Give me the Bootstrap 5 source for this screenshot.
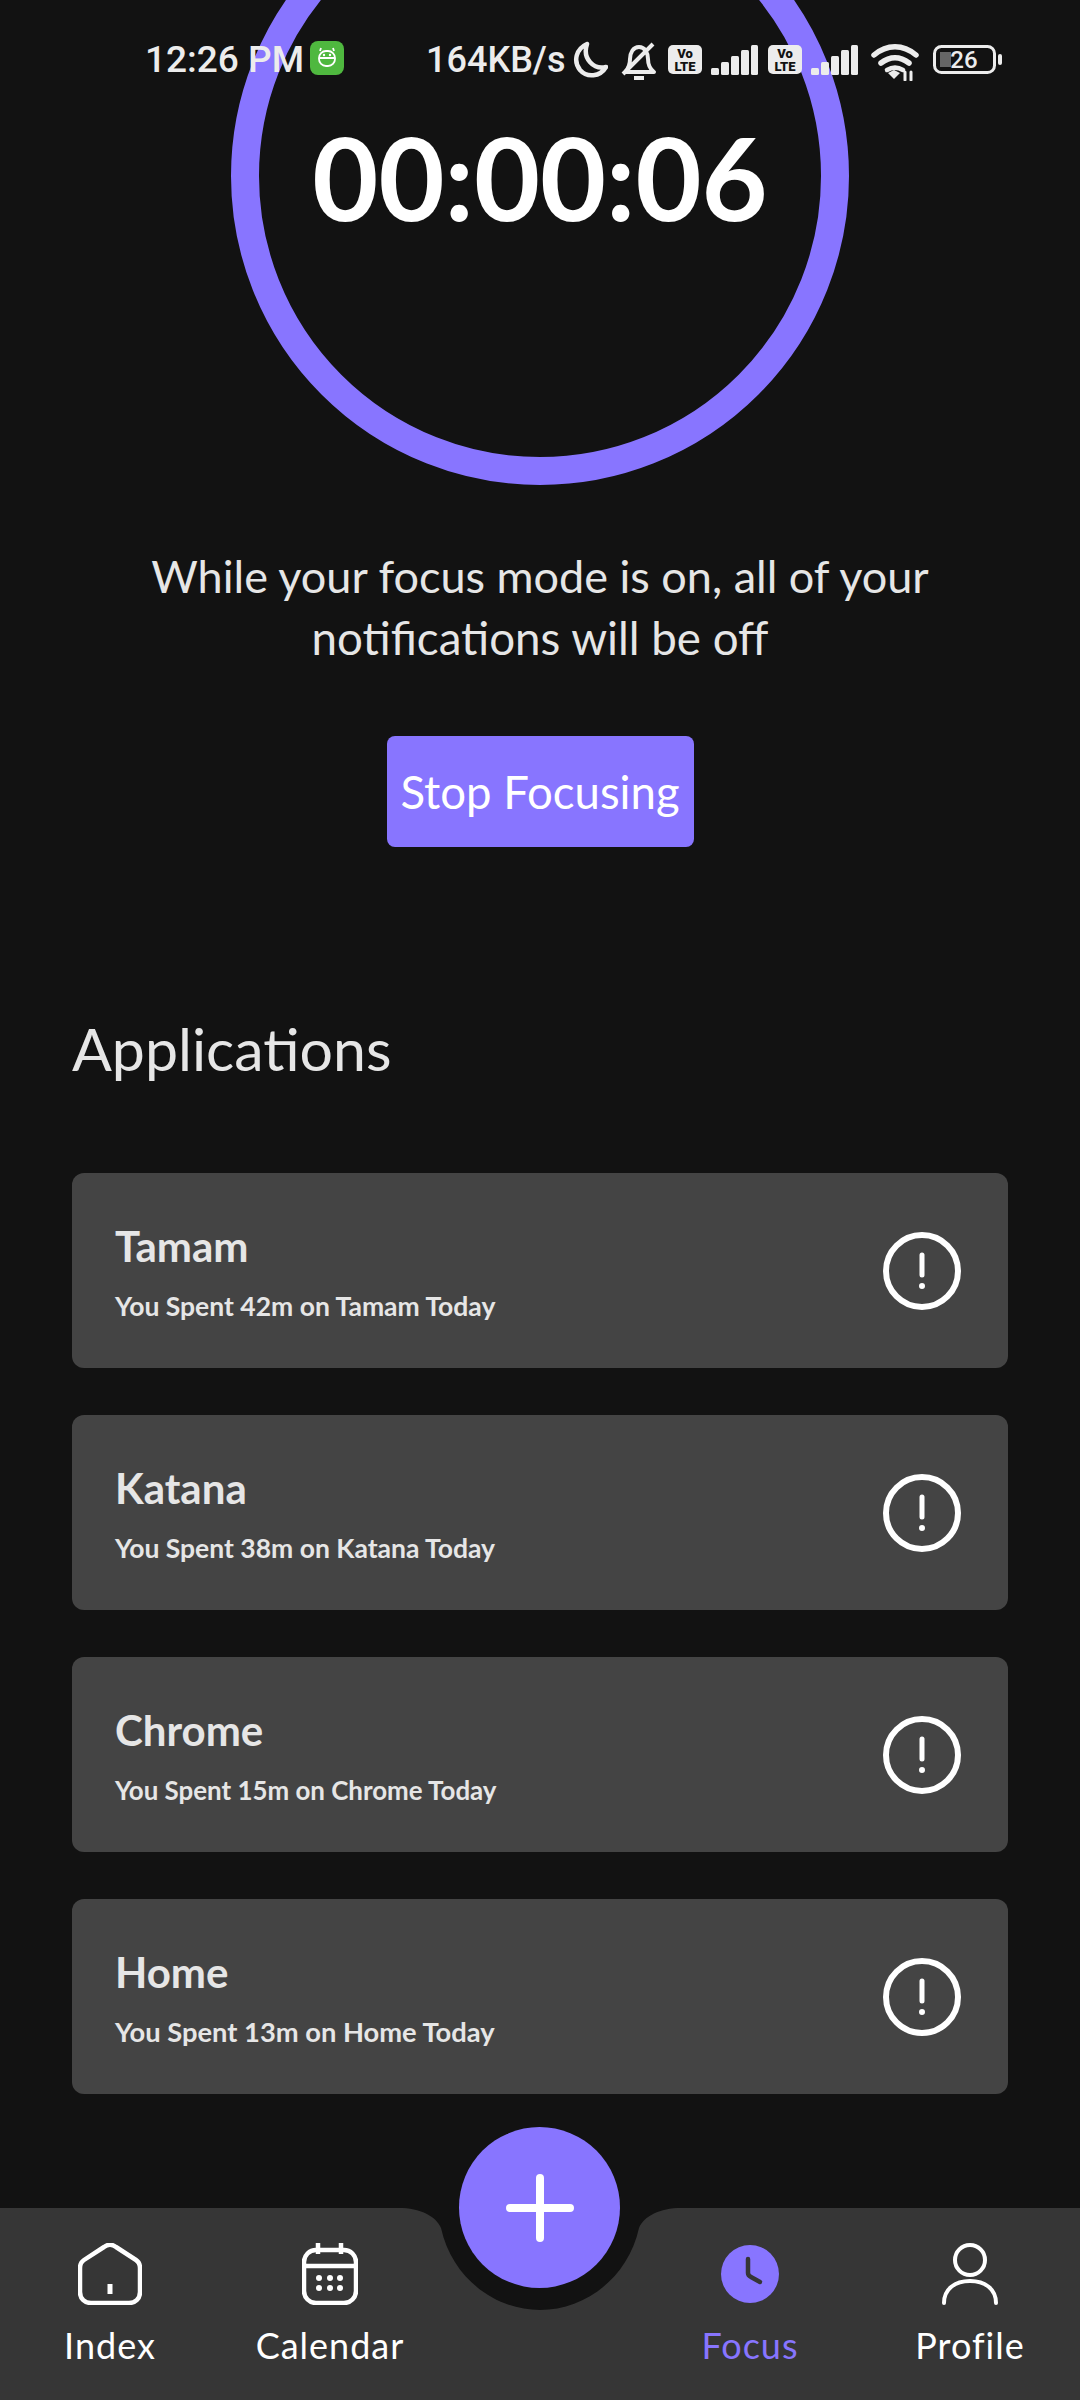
<!DOCTYPE html>
<html lang="en">
<head>
    <meta charset="UTF-8">
    <meta name="viewport" content="width=device-width, initial-scale=1.0">
    <title>Focus</title>
    <link href="https://cdn.jsdelivr.net/npm/bootstrap@5.3.0/dist/css/bootstrap.min.css" rel="stylesheet">
    <script src="https://cdn.jsdelivr.net/npm/bootstrap@5.3.0/dist/js/bootstrap.bundle.min.js"></script>
    <style>
        html, body { height: 100%; }
        body {
            background-color: #121212;
            color: #e6e6e6;
            font-family: Lato, "Liberation Sans", sans-serif;
            overflow: hidden;
        }
        .phone-page { width: 1080px; height: 2400px; overflow: hidden; }
        .status-row {
            top: 0; left: 0; width: 1080px; height: 120px;
            padding: 41px 0 0 145px;
            font-family: Roboto, "Liberation Sans", sans-serif;
            font-size: 37px; font-weight: 500; line-height: 38px; color: #ececec;
            z-index: 5;
        }
        .status-row svg { display: block; flex: none; }
        .status-time { width: 157px; white-space: nowrap; }
        .status-speed { width: 142px; margin-left: 82px; font-size: 36px; white-space: nowrap; }
        .focus-ring {
            width: 618px; height: 618px; margin-top: -133px;
            border: 28px solid #8875ff; border-radius: 50%;
        }
        .focus-time { font-size: 114px; font-weight: 700; line-height: 1; color: #fff; margin-top: 2px; }
        .focus-note { font-size: 45px; line-height: 61px; margin-top: 61px; margin-bottom: 0; }
        .note-second { font-size: 45.7px; }
        .stop-btn {
            width: 307px; height: 111px; margin-top: 67px; padding: 0;
            background: #8875ff; border: 0; border-radius: 8px; color: #fff;
            font-size: 45.5px; line-height: 1;
        }
        .apps-title { font-size: 59px; font-weight: 400; line-height: 70px; margin: 167px 0 0 72px; }
        .apps-list { margin: 89px 72px 0; gap: 47px; }
        .app-row { height: 195px; padding: 0 47px 0 43px; background: #444444; border-radius: 12px; }
        .app-name { font-size: 42px; font-weight: 700; line-height: 48px; margin: 1px 0 21px; }
        .app-spent { font-size: 26.5px; font-weight: 700; line-height: 30px; margin: 0; }
        .spent-chrome { font-size: 25.9px; }
        .spent-home { font-size: 27.3px; }
        .tab-bar { height: 192px; background: #363636; }
        .tab-notch { left: 0; top: 0; width: 1080px; height: 104px; }
        .tab-item { width: 220px; padding-top: 35px; font-size: 36px; letter-spacing: 1px; line-height: 44px; color: #fff; }
        .tab-item svg { display: block; height: 62px; margin-bottom: 18px; }
        .tab-gap { width: 200px; }
        .tab-on { color: #8875ff; }
        .add-btn {
            left: 459px; top: -81px; width: 161px; height: 161px; padding: 0;
            background: #8875ff; border: 0; border-radius: 50%;
        }
    </style>
</head>
<body>
<div class="phone-page position-relative d-flex flex-column">

    <div class="status-row position-absolute d-flex align-items-start">
        <span class="status-time">12:26 PM</span>
        <svg width="34" height="34" viewBox="0 0 34 34" class="ms-2">
            <rect width="34" height="34" rx="8" fill="#4fb83f"/>
            <g fill="none" stroke="#fff" stroke-width="1.8">
                <rect x="9" y="10" width="16" height="15" rx="7"/>
                <path d="M10 10l1-3M24 10l-1-3M9 17h16"/>
            </g>
            <circle cx="14" cy="14" r="1.2" fill="#fff"/>
            <circle cx="20" cy="14" r="1.2" fill="#fff"/>
        </svg>
        <span class="status-speed">164KB/s</span>
        <svg width="36" height="38" viewBox="0 0 36 38" class="ms-1" fill="none" stroke="#ececec" stroke-width="4.5">
            <path d="M15 3C4 8 1 20 8 29c7 8 20 7 26-3C22 29 10 18 15 3z" stroke-linejoin="round"/>
        </svg>
        <svg width="38" height="40" viewBox="0 0 38 40" style="margin-left:12px" fill="none" stroke="#ececec" stroke-width="4">
            <path d="M5 31c3-3 5-7 5-13s3-12 9-12 9 6 9 12c0 6 2 10 6 13zM14 37h10M3 33L33 3" stroke-linejoin="round"/>
        </svg>
        <svg width="34" height="30" viewBox="0 0 34 30" style="margin:4px 0 0 10px">
            <rect width="34" height="29" rx="5" fill="#ececec"/>
            <text x="17" y="13" font-size="13" font-weight="900" text-anchor="middle" fill="#121212" font-family="Roboto, sans-serif">Vo</text>
            <text x="17" y="26" font-size="13" font-weight="900" text-anchor="middle" fill="#121212" font-family="Roboto, sans-serif">LTE</text>
        </svg>
        <svg width="48" height="32" viewBox="0 0 48 32" style="margin:4px 0 0 9px" fill="#ececec">
            <rect x="0" y="23" width="8" height="7" rx="1.5"/><rect x="10" y="17" width="8" height="13" rx="1.5"/><rect x="20" y="11" width="8" height="19" rx="1.5"/><rect x="30" y="5" width="8" height="25" rx="1.5"/><rect x="40" y="0" width="7" height="30" rx="1.5"/>
        </svg>
        <svg width="34" height="30" viewBox="0 0 34 30" style="margin:4px 0 0 9px">
            <rect width="34" height="29" rx="5" fill="#ececec"/>
            <text x="17" y="13" font-size="13" font-weight="900" text-anchor="middle" fill="#121212" font-family="Roboto, sans-serif">Vo</text>
            <text x="17" y="26" font-size="13" font-weight="900" text-anchor="middle" fill="#121212" font-family="Roboto, sans-serif">LTE</text>
        </svg>
        <svg width="48" height="32" viewBox="0 0 48 32" style="margin:4px 0 0 9px" fill="#ececec">
            <rect x="0" y="23" width="8" height="7" rx="1.5"/><rect x="10" y="17" width="8" height="13" rx="1.5"/><rect x="20" y="11" width="8" height="19" rx="1.5"/><rect x="30" y="5" width="8" height="25" rx="1.5"/><rect x="40" y="0" width="7" height="30" rx="1.5"/>
        </svg>
        <svg width="48" height="38" viewBox="0 0 48 38" style="margin:2px 0 0 12px" fill="none" stroke="#ececec" stroke-width="5.5" stroke-linecap="round">
            <path d="M3 12c13-11 29-11 42 0M10 20c9-7 19-7 28 0"/>
            <path d="M16 27c5-3 11-3 16 0" stroke-width="4.5"/>
            <path d="M17 30l6-3 6 3-6 6z" fill="#ececec" stroke="none"/>
            <path d="M34 29v8M40 29v8" stroke-width="3"/>
        </svg>
        <svg width="70" height="30" viewBox="0 0 70 30" style="margin:4px 0 0 14px">
            <rect x="1.5" y="1.5" width="60" height="26" rx="7" fill="none" stroke="#ececec" stroke-width="3"/>
            <rect x="7" y="7" width="11" height="15" fill="#666"/>
            <rect x="65" y="9" width="4" height="11" rx="2" fill="#ececec"/>
            <text x="31" y="23" font-size="24" font-weight="500" text-anchor="middle" fill="#ececec" font-family="Roboto, sans-serif">26</text>
        </svg>
    </div>

    <div class="focus-ring flex-shrink-0 mx-auto d-flex align-items-center justify-content-center">
        <div class="focus-time">00:00:06</div>
    </div>

    <p class="focus-note text-center">While your focus mode is on, all of your<br><span class="note-second">notifications will be off</span></p>

    <button type="button" class="stop-btn btn flex-shrink-0 mx-auto">Stop Focusing</button>

    <h2 class="apps-title">Applications</h2>

    <div class="apps-list d-flex flex-column">
        <div class="app-row d-flex align-items-center justify-content-between">
            <div>
                <h3 class="app-name">Tamam</h3>
                <p class="app-spent">You Spent 42m on Tamam Today</p>
            </div>
            <svg width="78" height="78" viewBox="0 0 78 78" fill="none" stroke="#fff" stroke-width="6" stroke-linecap="round">
                <circle cx="39" cy="39" r="36"/><path d="M39 23v20" stroke-width="5"/><circle cx="39" cy="54" r="1.5" fill="#fff" stroke-width="3"/>
            </svg>
        </div>
        <div class="app-row d-flex align-items-center justify-content-between">
            <div>
                <h3 class="app-name">Katana</h3>
                <p class="app-spent">You Spent 38m on Katana Today</p>
            </div>
            <svg width="78" height="78" viewBox="0 0 78 78" fill="none" stroke="#fff" stroke-width="6" stroke-linecap="round">
                <circle cx="39" cy="39" r="36"/><path d="M39 23v20" stroke-width="5"/><circle cx="39" cy="54" r="1.5" fill="#fff" stroke-width="3"/>
            </svg>
        </div>
        <div class="app-row d-flex align-items-center justify-content-between">
            <div>
                <h3 class="app-name">Chrome</h3>
                <p class="app-spent spent-chrome">You Spent 15m on Chrome Today</p>
            </div>
            <svg width="78" height="78" viewBox="0 0 78 78" fill="none" stroke="#fff" stroke-width="6" stroke-linecap="round">
                <circle cx="39" cy="39" r="36"/><path d="M39 23v20" stroke-width="5"/><circle cx="39" cy="54" r="1.5" fill="#fff" stroke-width="3"/>
            </svg>
        </div>
        <div class="app-row d-flex align-items-center justify-content-between">
            <div>
                <h3 class="app-name">Home</h3>
                <p class="app-spent spent-home">You Spent 13m on Home Today</p>
            </div>
            <svg width="78" height="78" viewBox="0 0 78 78" fill="none" stroke="#fff" stroke-width="6" stroke-linecap="round">
                <circle cx="39" cy="39" r="36"/><path d="M39 23v20" stroke-width="5"/><circle cx="39" cy="54" r="1.5" fill="#fff" stroke-width="3"/>
            </svg>
        </div>
    </div>

    <nav class="tab-bar mt-auto flex-shrink-0 position-relative d-flex">
        <svg class="tab-notch position-absolute" viewBox="0 0 1080 104">
            <path d="M399 0C420 0 436 8 441 20C452 70 495 102 540 102C585 102 628 70 639 20C644 8 660 0 681 0Z" fill="#121212"/>
        </svg>
        <div class="tab-item d-flex flex-column align-items-center position-relative">
            <svg width="64" height="62" viewBox="0 0 64 62" fill="none" stroke="#fff" stroke-width="4.5" stroke-linejoin="round" stroke-linecap="round">
                <path d="M2 25C2 21 3 19 6 17L26 4C30 1 34 1 38 4L58 17C61 19 62 21 62 25V49C62 56 57 60 51 60H13C7 60 2 56 2 49Z"/><path d="M32 41v10" stroke-width="5" stroke-linecap="butt"/>
            </svg>
            <span>Index</span>
        </div>
        <div class="tab-item d-flex flex-column align-items-center position-relative">
            <svg width="56" height="62" viewBox="0 0 56 62" fill="none" stroke="#fff" stroke-width="4.5">
                <rect x="2" y="7" width="52" height="53" rx="12"/><path d="M2 23h52M16 0v11M39 0v11"/>
                <g fill="#fff" stroke="none"><circle cx="17" cy="35" r="3"/><circle cx="28" cy="35" r="3"/><circle cx="38" cy="35" r="3"/><circle cx="17" cy="45" r="3"/><circle cx="28" cy="45" r="3"/><circle cx="38" cy="45" r="3"/></g>
            </svg>
            <span>Calendar</span>
        </div>
        <div class="tab-gap"></div>
        <div class="tab-item tab-on d-flex flex-column align-items-center position-relative">
            <svg width="58" height="62" viewBox="0 0 58 62">
                <circle cx="29" cy="31" r="29" fill="#8875ff"/>
                <path d="M27 16v14c0 2 1 3 3 4l9 5" fill="none" stroke="#363636" stroke-width="4.5" stroke-linecap="round"/>
            </svg>
            <span>Focus</span>
        </div>
        <div class="tab-item d-flex flex-column align-items-center position-relative">
            <svg width="56" height="62" viewBox="0 0 56 62" fill="none" stroke="#fff" stroke-width="4">
                <circle cx="28" cy="17" r="15"/><path d="M2 60C2 46 13 38 28 38S54 46 54 60" stroke-linecap="round"/>
            </svg>
            <span>Profile</span>
        </div>
        <button type="button" class="add-btn btn position-absolute d-flex align-items-center justify-content-center" aria-label="Add">
            <svg width="68" height="68" viewBox="0 0 68 68" stroke="#fff" stroke-width="8" stroke-linecap="round"><path d="M34 4v60M4 34h60"/></svg>
        </button>
    </nav>
</div>
</body>
</html>
